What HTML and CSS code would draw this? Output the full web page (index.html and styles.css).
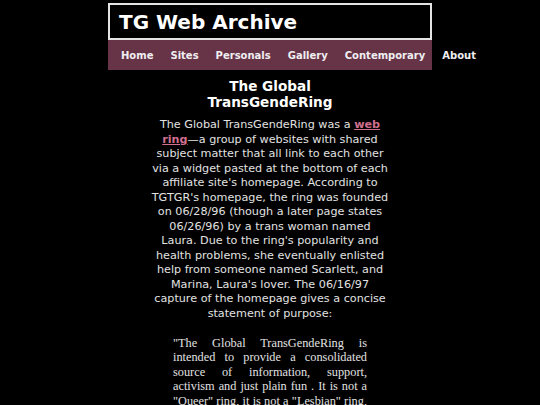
FILE: index.html
```html
<!DOCTYPE html>
<html lang="en">
<head>
<meta charset="utf-8">
<title>TG Web Archive</title>
<link rel="stylesheet" href="styles.css">
</head>
<body>
<div class="wrap">
  <header class="masthead">
    <div class="site-title">TG Web Archive</div>
  </header>
  <nav class="nav">
    <a class="nav-item" href="#">Home</a>
    <a class="nav-item" href="#">Sites</a>
    <a class="nav-item" href="#">Personals</a>
    <a class="nav-item" href="#">Gallery</a>
    <a class="nav-item" href="#">Contemporary</a>
    <a class="nav-item" href="#">About</a>
  </nav>
</div>
<main class="content">
  <h2 class="title">The Global<br>TransGendeRing</h2>
  <p class="intro">The Global TransGendeRing was a <a class="link" href="#">web ring</a>—a group of websites with shared subject matter that all link to each other via a widget pasted at the bottom of each affiliate site's homepage. According to TGTGR's homepage, the ring was founded on 06/28/96 (though a later page states 06/26/96) by a trans woman named Laura. Due to the ring's popularity and health problems, she eventually enlisted help from someone named Scarlett, and Marina, Laura's lover. The 06/16/97 capture of the homepage gives a concise statement of purpose:</p>
  <blockquote class="quote">"The Global TransGendeRing is intended to provide a consolidated source of information, support, activism and just plain fun . It is not a "Queer" ring, it is not a "Lesbian" ring, it is not a "Gay" ring. It is a ring for everyone who shares an interest in transgender issues."</blockquote>
</main>
</body>
</html>
```

FILE: styles.css
```css
html, body {
  margin: 0;
  padding: 0;
  background: #000;
}
body {
  font-family: "DejaVu Sans", Verdana, sans-serif;
  color: #e2e2e2;
}
.wrap {
  width: 324px;
  margin: 3px auto 0;
}
.masthead {
  border: 2px solid #e4e4e4;
  display: flex;
  align-items: center;
  padding-left: 9px;
  box-sizing: border-box;
  height: 37px;
}
.site-title {
  font-weight: bold;
  font-size: 20px;
  color: #fff;
  line-height: 1;
}
.nav {
  background: #663347;
  height: 30px;
  display: flex;
  flex-wrap: nowrap;
  align-items: center;
  padding-left: 4.5px;
}
.nav-item {
  font-weight: bold;
  font-size: 10px;
  color: #f0eef0;
  text-decoration: none;
  padding: 0 8.5px;
  white-space: nowrap;
}
.content {
  width: 240px;
  margin: 0 auto;
  text-align: center;
  font-size: 11.2px;
  line-height: 14.5px;
}
.title {
  font-size: 13.6px;
  line-height: 16px;
  font-weight: bold;
  color: #fff;
  margin: 8px 0 8px;
}
.intro {
  margin: 0 0 14.5px;
}
.link {
  color: #d06f8e;
  font-weight: bold;
}
.quote {
  margin: 0 23px;
  font-family: "Liberation Serif", "Times New Roman", serif;
  font-size: 12.3px;
  line-height: 14.5px;
  text-align: justify;
  color: #e2e2e2;
}
```
